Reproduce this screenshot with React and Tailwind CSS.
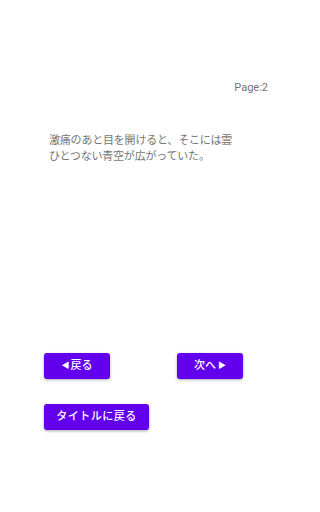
export default function App() {
  const font = { fontFamily: '"Roboto", "Noto Sans CJK JP", sans-serif' };

  return (
    <div className="w-[288px] h-[512px] bg-white flex flex-col" style={font}>
      {/* Page indicator */}
      <div className="flex justify-end pt-[81px] pr-[20px]">
        <span className="text-[11px] leading-[14px] text-[#757575]">Page:2</span>
      </div>

      {/* Story text */}
      <div className="pt-[38px] px-[49px]">
        <p className="text-[11px] leading-[16px] text-[#757575] tracking-[-0.2px]">
          激痛のあと目を開けると、そこには雲
          <br />
          ひとつない青空が広がっていた。
        </p>
      </div>

      {/* Navigation */}
      <div className="mt-auto pb-[82px] px-[44px] flex flex-col gap-[25px]">
        <div className="flex justify-between pr-[1px]">
          <button className="w-[66px] h-[26px] rounded-[3px] bg-[#6200ee] text-white text-[11px] font-medium shadow-[0_1px_3px_rgba(0,0,0,0.35)] flex items-center justify-center">
            <span className="text-[8px] mr-[1px]">◀</span>戻る
          </button>
          <button className="w-[66px] h-[26px] rounded-[3px] bg-[#6200ee] text-white text-[11px] font-medium shadow-[0_1px_3px_rgba(0,0,0,0.35)] flex items-center justify-center">
            次へ<span className="text-[8px] ml-[2px]">▶</span>
          </button>
        </div>
        <div className="flex">
          <button className="w-[105px] h-[26px] rounded-[3px] bg-[#6200ee] text-white text-[11px] font-medium tracking-[0.5px] shadow-[0_1px_3px_rgba(0,0,0,0.35)] flex items-center justify-center">
            タイトルに戻る
          </button>
        </div>
      </div>
    </div>
  );
}
